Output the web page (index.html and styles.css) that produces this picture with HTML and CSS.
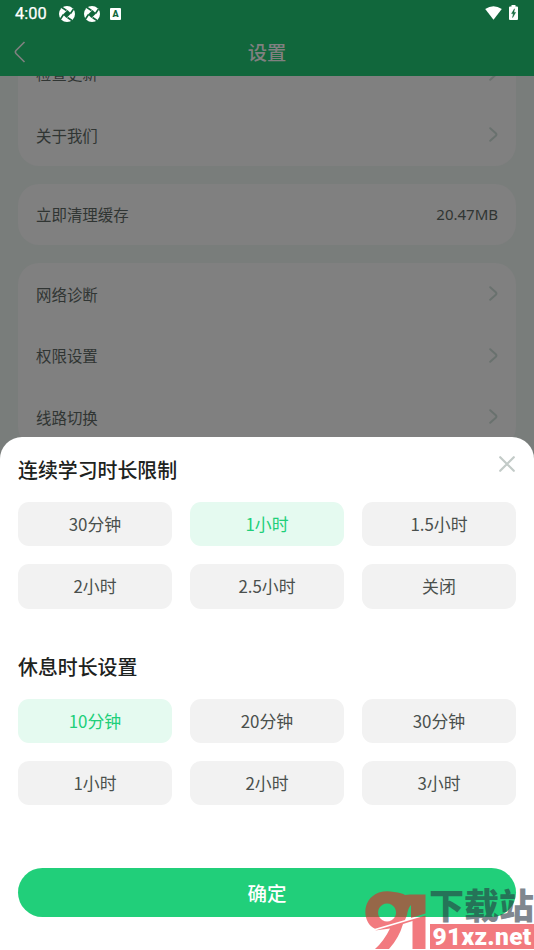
FILE: index.html
```html
<!DOCTYPE html>
<html lang="zh-CN">
<head>
<meta charset="utf-8">
<title>设置</title>
<link rel="stylesheet" href="styles.css">
</head>
<body>
<div class="screen">
  <header class="header">
    <div class="status">
      <span class="clock">4:00</span>
      <svg class="swirl" viewBox="0 0 16 16"><circle cx="8" cy="8" r="8" fill="#fff"/><path d="M8.500 4 12 7.500 7.500 12 4 8.500Z" fill="#11673c"/><path d="M7.500 4.500 3 1.500M11.500 7.500 14.500 3M8.500 11.500 13 14.500M4.500 8.500 1.500 13" fill="none" stroke="#11673c" stroke-width="1.600"/></svg>
      <svg class="swirl" viewBox="0 0 16 16"><circle cx="8" cy="8" r="8" fill="#fff"/><path d="M8.500 4 12 7.500 7.500 12 4 8.500Z" fill="#11673c"/><path d="M7.500 4.500 3 1.500M11.500 7.500 14.500 3M8.500 11.500 13 14.500M4.500 8.500 1.500 13" fill="none" stroke="#11673c" stroke-width="1.600"/></svg>
      <span class="badge">A</span>
      <svg class="wifi" viewBox="0 0 17 14"><path d="M.2 3Q8.500-2.500 16.800 3L8.500 13.800Z" fill="#fff"/></svg>
      <svg class="battery" viewBox="0 0 9 15"><path d="M2.500 0h4v1.500H8q1 0 1 1V14q0 1-1 1H1q-1 0-1-1V2.500q0-1 1-1h1.500Z" fill="#fff"/><path d="M5.500 3.800 2.600 8.600h1.800L3.600 12.600 6.600 7.400H4.800Z" fill="#11673c" stroke="#11673c" stroke-width=".5"/></svg>
    </div>
    <div class="nav">
      <svg class="back" viewBox="0 0 12 22"><path d="M10.500 1 2 9.500Q.8 11 2 12.500L10.500 21" /></svg>
      <h1>设置</h1>
    </div>
  </header>

  <main class="list">
    <section class="card first">
      <div class="row"><span>检查更新</span><svg class="chev" viewBox="0 0 9 15"><path d="m1.200 1.200 5.600 5.100q1.200 1.200 0 2.400l-5.600 5.100"/></svg></div>
      <div class="row"><span>关于我们</span><svg class="chev" viewBox="0 0 9 15"><path d="m1.200 1.200 5.600 5.100q1.200 1.200 0 2.400l-5.600 5.100"/></svg></div>
    </section>
    <section class="card">
      <div class="row"><span>立即清理缓存</span><span class="size">20.47MB</span></div>
    </section>
    <section class="card">
      <div class="row"><span>网络诊断</span><svg class="chev" viewBox="0 0 9 15"><path d="m1.200 1.200 5.600 5.100q1.200 1.200 0 2.400l-5.600 5.100"/></svg></div>
      <div class="row"><span>权限设置</span><svg class="chev" viewBox="0 0 9 15"><path d="m1.200 1.200 5.600 5.100q1.200 1.200 0 2.400l-5.600 5.100"/></svg></div>
      <div class="row"><span>线路切换</span><svg class="chev" viewBox="0 0 9 15"><path d="m1.200 1.200 5.600 5.100q1.200 1.200 0 2.400l-5.600 5.100"/></svg></div>
    </section>
  </main>

  <div class="sheet">
    <div class="sheet-head">
      <h2>连续学习时长限制</h2>
      <svg class="close" viewBox="0 0 16 16"><path d="m1.200 1.200 13.600 13.600M14.800 1.200 1.200 14.800"/></svg>
    </div>
    <div class="options">
      <button>30分钟</button>
      <button class="on">1小时</button>
      <button>1.5小时</button>
      <button>2小时</button>
      <button>2.5小时</button>
      <button>关闭</button>
    </div>
    <h2 class="second">休息时长设置</h2>
    <div class="options">
      <button class="on">10分钟</button>
      <button>20分钟</button>
      <button>30分钟</button>
      <button>1小时</button>
      <button>2小时</button>
      <button>3小时</button>
    </div>
    <button class="confirm">确定</button>
  </div>

  <div class="watermark">
    <svg class="mark" viewBox="0 0 62 60">
      <g fill="#e91f26">
        <path fill-rule="evenodd" d="M11 38.800C-2 33-3 9 15 2.500Q22 .5 30 2Q38 3 41 5L46 4.500H61.500V23.500L47 28V15Q44 18 43 25L41 30ZM23 13.500a9 9 0 1 0 .1 0Z"/>
        <path d="M11 40.500 61.500 25.500V59H48.500V31L39 34Q35 48 25 59H11Q20 51 26 38.500Z"/>
      </g>
    </svg>
    <div class="site">
      <span class="site-name">下载站</span>
      <span class="site-url">91xz.net</span>
    </div>
  </div>
</div>
</body>
</html>
```
FILE: styles.css
```css
* { box-sizing: border-box; }

body {
  margin: 0;
  font-family: "Noto Sans", "Noto Sans CJK SC", sans-serif;
}

h1, h2 { margin: 0; font-weight: 500; }

h1, h2, .row, button { font-family: "Noto Sans CJK SC", sans-serif; }

.screen {
  position: relative;
  width: 534px;
  height: 950px;
  overflow: hidden;
  background: #797d7b;
}

.header {
  position: relative;
  z-index: 1;
  height: 76px;
  background: #11673c;
}

.status {
  display: flex;
  align-items: center;
  height: 28px;
  padding: 0 15px;
}

.clock {
  width: 44px;
  color: #fff;
  font: 400 16.400px/28px Roboto, sans-serif;
  -webkit-text-stroke: .25px #fff;
}

.swirl { width: 16px; height: 16px; margin-right: 9px; }

.badge {
  width: 11px;
  height: 12px;
  margin-left: 1px;
  border-radius: 1px;
  background: #fff;
  color: #11673c;
  font: 900 9px/12px Roboto, sans-serif;
  text-align: center;
}

.wifi { width: 17px; height: 14px; margin-left: auto; margin-top: -2px; }
.battery { width: 9px; height: 15px; margin-left: 7px; margin-right: 1px; margin-top: -3px; }

.nav {
  display: flex;
  align-items: center;
  height: 48px;
  padding: 0 14px;
}

.back { width: 12px; height: 22px; fill: none; stroke: #808080; stroke-width: 1.6; }

.nav h1 {
  flex: 1;
  padding-right: 12px;
  color: #808080;
  font-size: 19.3px;
  line-height: 48px;
  text-align: center;
}

.list {
  display: flex;
  flex-direction: column;
  gap: 18px;
  padding: 0 18px;
}

.card { border-radius: 21px; background: #808080; }
.first { margin-top: -33.500px; }

.row {
  display: flex;
  align-items: center;
  justify-content: space-between;
  height: 61.500px;
  padding: 0 18px;
  color: #303533;
  font-size: 15.450px;
}

.size { font-family: "Noto Sans", sans-serif; font-size: 15px; }
.chev { width: 9px; height: 15px; fill: none; stroke: #69716e; stroke-width: 2; stroke-linecap: round; }

.sheet {
  position: absolute;
  inset: 437px 0 0;
  padding: 0 18px;
  border-radius: 22px 22px 0 0;
  background: #fff;
}

.sheet-head { display: flex; justify-content: space-between; height: 65px; }
.sheet h2 { color: #1d2220; font-size: 19.900px; line-height: 30px; }
.sheet-head h2 { padding-top: 18px; }
.close { width: 16px; height: 16px; margin-top: 19px; margin-right: 1px; fill: none; stroke: #c3cbc8; stroke-width: 2.200; stroke-linecap: round; }
.sheet .second { margin-top: 43px; margin-bottom: 17px; }

.options {
  display: grid;
  grid-template-columns: repeat(3, 154px);
  gap: 18px;
}

button { border: 0; padding: 0; }

.options button {
  height: 44.300px;
  padding-bottom: 1px;
  border-radius: 11px;
  background: #f2f2f2;
  color: #4a504d;
  font-size: 16.900px;
}

.options .on { background: #e5faf0; color: #20cf79; }

.confirm {
  width: 498px;
  height: 49px;
  margin-top: 62.500px;
  border-radius: 25px;
  background: #21cf7a;
  color: #fff;
  font-size: 19.500px;
  font-weight: 500;
}

.watermark {
  position: absolute;
  right: 0;
  bottom: 0;
  display: flex;
  width: 170px;
  height: 60px;
  opacity: .59;
}

.mark { width: 62px; height: 60px; }
.site { width: 105px; margin-left: 3px; }

.site-name {
  display: block;
  height: 34px;
  color: #293542;
  font: 900 35px/28px "Noto Sans CJK SC", sans-serif;
  white-space: nowrap;
}

.site-url {
  display: block;
  height: 25px;
  margin-left: 1px;
  background: #e91f26;
  color: #fff;
  font: 900 24.500px/26px Roboto, sans-serif;
  letter-spacing: .300px;
  text-align: center;
}
```
